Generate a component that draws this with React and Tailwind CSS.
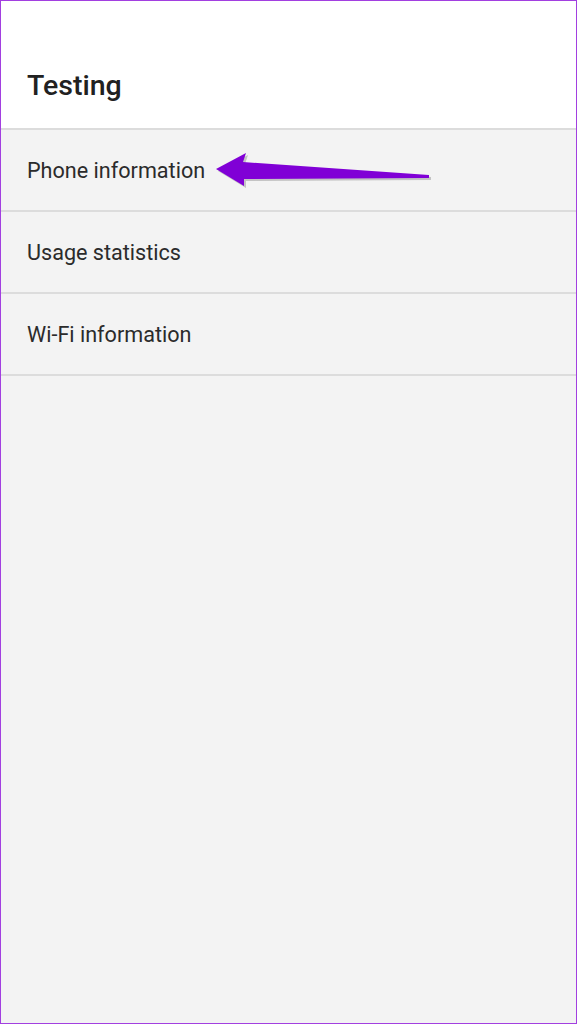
import React from 'react';

const rows = ['Phone information', 'Usage statistics', 'Wi-Fi information'];

const Arrow = () => (
  <svg
    className="absolute left-0 top-0 pointer-events-none"
    width="577"
    height="1024"
    viewBox="0 0 577 1024"
  >
    <polygon
      points="217,170 247,154 244,163 430,176 430,179 245,180 245,187"
      fill="#9a9a9a"
      opacity="0.55"
    />
    <polygon
      points="215,168 245,152 242,161 428,174 428,177 243,178 243,185"
      fill="#8000d6"
    />
  </svg>
);

export default function App() {
  return (
    <div
      className="relative w-[577px] h-[1024px] border border-[#a23fe0] bg-[#f3f3f3] overflow-hidden"
      style={{ fontFamily: 'Roboto, "Noto Sans", sans-serif' }}
    >
      <header className="bg-white h-[129px] pt-[69px] pl-[26px] border-b-2 border-[#dcdcdc]">
        <h1 className="text-[28.5px] leading-[32px] font-medium text-[#212121]">Testing</h1>
      </header>
      {rows.map(label => (
        <div
          key={label}
          className="h-[82px] flex items-center pl-[26px] pt-[2px] border-b-2 border-[#dcdcdc]"
        >
          <span className="text-[21.6px] text-[#2b2b2b]">{label}</span>
        </div>
      ))}
      <Arrow />
    </div>
  );
}
